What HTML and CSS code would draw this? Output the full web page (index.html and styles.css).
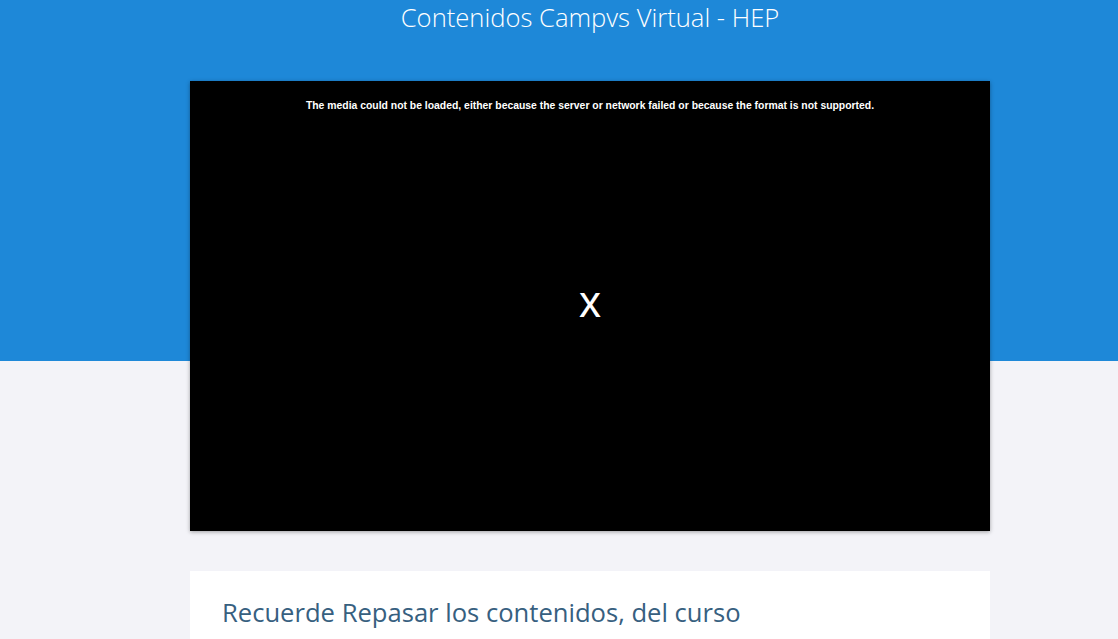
FILE: index.html
```html
<!DOCTYPE html>
<html lang="es">
<head>
<meta charset="utf-8">
<title>Contenidos Campvs Virtual - HEP</title>
<link rel="stylesheet" href="styles.css">
</head>
<body>
<div class="page">
  <header class="hero">
    <h1 class="hero-title">Contenidos Campvs Virtual - HEP</h1>
  </header>
  <main class="content">
    <div class="player">
      <p class="player-error">The media could not be loaded, either because the server or network failed or because the format is not supported.</p>
      <span class="player-x">x</span>
    </div>
    <section class="card">
      <h2 class="card-title">Recuerde Repasar los contenidos, del curso</h2>
    </section>
  </main>
</div>
</body>
</html>
```

FILE: styles.css
```css
html, body {
  margin: 0;
  padding: 0;
}
body {
  background: #f3f3f8;
  font-family: "Open Sans", "Liberation Sans", sans-serif;
  overflow: hidden;
}
.page {
  width: 1180px;
  position: relative;
}
.hero {
  background: #1e88d8;
  height: 361px;
  display: flex;
  justify-content: center;
}
.hero-title {
  margin: 0;
  padding-top: 0;
  font-weight: 300;
  font-size: 25.6px;
  line-height: 36px;
  color: #ffffff;
}
.content {
  width: 800px;
  margin: -280px auto 0;
  display: flex;
  flex-direction: column;
  gap: 40px;
}
.player {
  position: relative;
  height: 450px;
  background: #000;
  box-shadow: 0 1px 4px rgba(0,0,0,0.35);
  display: flex;
  flex-direction: column;
  align-items: center;
}
.player-error {
  margin: 19px 0 0;
  font-family: "Liberation Sans", Arial, sans-serif;
  font-weight: bold;
  font-size: 10.4px;
  color: #fff;
}
.player-x {
  position: absolute;
  left: 50%;
  top: 50%;
  transform: translate(-50%, -58%);
  font-family: "Liberation Sans", Arial, sans-serif;
  font-size: 44px;
  color: #fff;
}
.card {
  background: #fff;
  height: 200px;
  padding: 24px 32px;
  box-sizing: border-box;
}
.card-title {
  margin: 0;
  font-weight: 400;
  font-size: 25.6px;
  line-height: 36px;
  color: #37607f;
}
```
